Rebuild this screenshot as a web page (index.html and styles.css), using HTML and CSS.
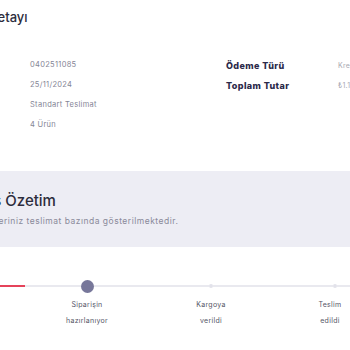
FILE: index.html
```html
<!DOCTYPE html>
<html lang="tr">
<head>
<meta charset="utf-8">
<link rel="stylesheet" href="styles.css">
</head>
<body>
<div class="page">
  <h2 class="title detail-title">Sipariş Detayı</h2>
  <div class="info">
    <div class="col col-left">
      <div class="meta">0402511085</div>
      <div class="meta">25/11/2024</div>
      <div class="meta">Standart Teslimat</div>
      <div class="meta">4 Ürün</div>
    </div>
    <div class="col col-mid">
      <div class="label">Ödeme Türü</div>
      <div class="label">Toplam Tutar</div>
    </div>
    <div class="col col-right">
      <div class="value">Kredi Kartı</div>
      <div class="value">₺1.149,90</div>
    </div>
  </div>
  <section class="band">
    <h2 class="title band-title">Sipariş Özetim</h2>
    <p class="band-sub">Siparişleriniz teslimat bazında gösterilmektedir.</p>
  </section>
  <div class="steps">
    <div class="step">
      <div class="rail"><span class="seg red"></span><span class="dot small hidden"></span><span class="seg red"></span></div>
      <div class="step-label">Sipariş<br>alındı</div>
    </div>
    <div class="step">
      <div class="rail"><span class="seg"></span><span class="dot big"></span><span class="seg"></span></div>
      <div class="step-label">Siparişin<br>hazırlanıyor</div>
    </div>
    <div class="step">
      <div class="rail"><span class="seg"></span><span class="dot small"></span><span class="seg"></span></div>
      <div class="step-label">Kargoya<br>verildi</div>
    </div>
    <div class="step step-last">
      <div class="rail"><span class="seg"></span><span class="dot small"></span><span class="seg"></span></div>
      <div class="step-label">Teslim<br>edildi</div>
    </div>
  </div>
</div>
</body>
</html>
```
FILE: styles.css
```css
html, body {
  margin: 0;
  padding: 0;
  background: #ffffff;
  overflow: hidden;
}
body {
  width: 350px;
  height: 350px;
  font-family: Inter, "Open Sans", "DejaVu Sans", sans-serif;
}
.page {
  width: 350px;
}
.title {
  margin: 0;
  font-weight: 500;
  color: #2c2c3c;
  white-space: nowrap;
}
.detail-title {
  font-size: 13px;
  line-height: 16px;
  padding-top: 9px;
  margin-left: -58px;
}
.info {
  display: flex;
  margin-top: 30px;
  height: 116px;
}
.col {
  display: flex;
  flex-direction: column;
  flex: none;
}
.col-left {
  margin-left: 30px;
  width: 196px;
}
.col-mid {
  width: 112px;
}
.meta {
  font-size: 7.5px;
  line-height: 20px;
  letter-spacing: 0.3px;
  color: #858595;
}
.label {
  font-size: 9px;
  font-weight: 800;
  line-height: 20px;
  letter-spacing: 0.4px;
  color: #2b2a4a;
  margin-top: 0.5px;
}
.value {
  font-size: 7px;
  line-height: 20px;
  letter-spacing: 0.3px;
  color: #a8a8b2;
  white-space: nowrap;
  margin-top: 0.5px;
}
.band {
  background: #ededf4;
  height: 76px;
  box-sizing: border-box;
  padding-top: 21px;
  overflow: hidden;
}
.band-title {
  font-size: 15px;
  line-height: 18px;
  margin-left: -48px;
}
.band-sub {
  margin: 5px 0 0 -35px;
  font-size: 8.5px;
  line-height: 12px;
  letter-spacing: 0.5px;
  color: #8a8a9a;
  white-space: nowrap;
}
.steps {
  display: flex;
  margin-left: -99px;
  margin-top: 32px;
}
.step {
  width: 124px;
  flex: none;
  display: flex;
  flex-direction: column;
  align-items: stretch;
}
.rail {
  display: flex;
  align-items: center;
  height: 14px;
}
.seg {
  flex: 1;
  height: 2px;
  background: #e9e9ef;
}
.seg.red {
  background: #e5435a;
}
.dot {
  flex: none;
  border-radius: 50%;
}
.dot.big {
  width: 13px;
  height: 13px;
  background: #77779a;
}
.dot.small {
  width: 4px;
  height: 4px;
  background: #e2e2ea;
}
.dot.hidden {
  background: #e5435a;
}
.step-label {
  margin-top: 4px;
  text-align: center;
  font-size: 7px;
  line-height: 16px;
  letter-spacing: 0.3px;
  color: #555566;
}
.step-last .step-label {
  padding-right: 10px;
}
```
